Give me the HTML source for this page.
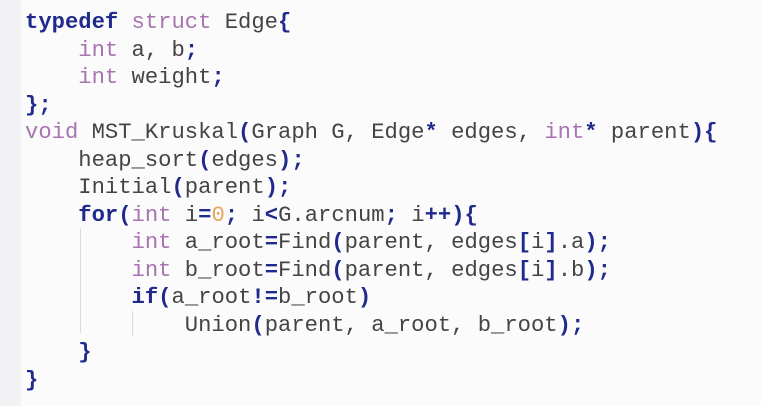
<!DOCTYPE html>
<html><head><meta charset="utf-8"><style>
html,body{margin:0;padding:0;width:761px;height:406px;overflow:hidden;background:#fbfbfc;}
.strip{position:absolute;left:0;top:0;width:21px;height:406px;background:#f2f2f4;}
pre{position:absolute;left:25px;top:9px;margin:0;font-family:"Liberation Mono",monospace;font-size:22.2px;line-height:27.5px;color:#444;}
.k{color:#1f2a8c;font-weight:bold;}
.t{color:#a774b0;}
.p{color:#1f2a8c;font-weight:bold;}
.n{color:#e8a45c;}
.g{position:absolute;width:1px;background:#dcdcdf;}
</style></head><body>
<div class="strip"></div>
<div class="g" style="left:80px;top:228px;height:105px"></div>
<div class="g" style="left:132px;top:311px;height:25px"></div>
<pre><span class="k">typedef</span> <span class="t">struct</span> Edge<span class="p">{</span>
    <span class="t">int</span> a, b<span class="p">;</span>
    <span class="t">int</span> weight<span class="p">;</span>
<span class="p">};</span>
<span class="t">void</span> MST_Kruskal<span class="p">(</span>Graph G, Edge<span class="p">*</span> edges, <span class="t">int</span><span class="p">*</span> parent<span class="p">){</span>
    heap_sort<span class="p">(</span>edges<span class="p">);</span>
    Initial<span class="p">(</span>parent<span class="p">);</span>
    <span class="k">for</span><span class="p">(</span><span class="t">int</span> i<span class="p">=</span><span class="n">0</span><span class="p">;</span> i<span class="p">&lt;</span>G.arcnum<span class="p">;</span> i<span class="p">++){</span>
        <span class="t">int</span> a_root<span class="p">=</span>Find<span class="p">(</span>parent, edges<span class="p">[</span>i<span class="p">]</span>.a<span class="p">);</span>
        <span class="t">int</span> b_root<span class="p">=</span>Find<span class="p">(</span>parent, edges<span class="p">[</span>i<span class="p">]</span>.b<span class="p">);</span>
        <span class="k">if</span><span class="p">(</span>a_root<span class="p">!=</span>b_root<span class="p">)</span>
            Union<span class="p">(</span>parent, a_root, b_root<span class="p">);</span>
    <span class="p">}</span>
<span class="p">}</span></pre>
</body></html>
